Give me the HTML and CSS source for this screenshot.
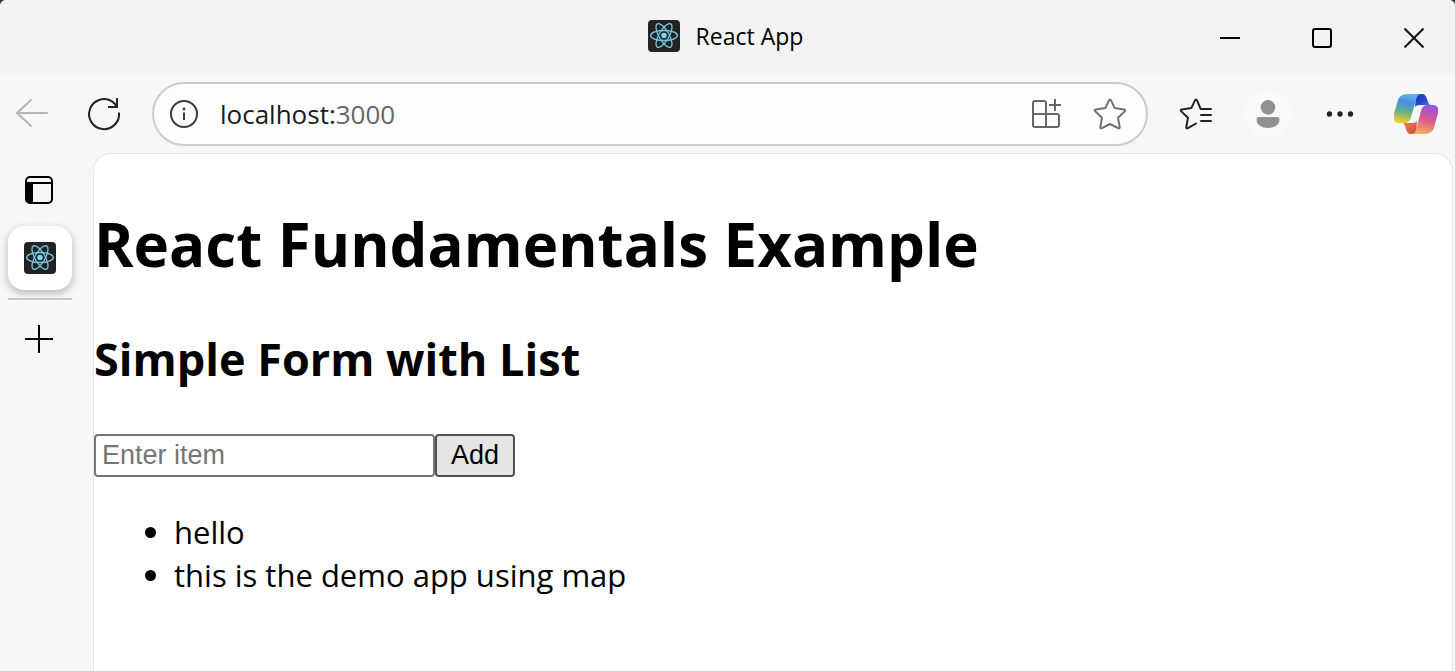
FILE: index.html
```html
<!DOCTYPE html>
<html lang="en">
<head>
<meta charset="utf-8">
<title>React App</title>
<link rel="stylesheet" href="styles.css">
</head>
<body>
<svg class="defs" aria-hidden="true">
  <symbol id="react-logo" viewBox="0 0 32 32">
    <rect width="32" height="32" rx="4" fill="#222"/>
    <circle cx="16" cy="15.500" r="2.700" fill="#7fd7f5"/>
    <g fill="none" stroke="#74c9e8" stroke-width="1.300">
      <ellipse cx="16" cy="15.500" rx="13.400" ry="5"/>
      <ellipse cx="16" cy="15.500" rx="13.400" ry="5" transform="rotate(60 16 15.500)"/>
      <ellipse cx="16" cy="15.500" rx="13.400" ry="5" transform="rotate(120 16 15.500)"/>
    </g>
  </symbol>
</svg>
<div class="window">
  <header class="titlebar">
    <div class="title">
      <svg class="icon-32" aria-hidden="true"><use href="#react-logo"/></svg>
      <span>React App</span>
    </div>
    <div class="window-controls">
      <button class="control" type="button" aria-label="Minimize"><svg width="20" height="20" viewBox="0 0 20 20"><path d="M0 10h20" stroke="#000" stroke-width="2"/></svg></button>
      <button class="control" type="button" aria-label="Maximize"><svg width="20" height="20" viewBox="0 0 20 20"><rect x="1" y="1" width="18" height="18" rx="2" fill="none" stroke="#000" stroke-width="2"/></svg></button>
      <button class="control" type="button" aria-label="Close"><svg width="20" height="20" viewBox="0 0 20 20"><path d="M.5.500l19 19M19.500.500l-19 19" stroke="#111" stroke-width="2"/></svg></button>
    </div>
  </header>

  <nav class="toolbar" aria-label="Browser toolbar">
    <button class="tool" type="button" aria-label="Back"><svg width="36" height="32" viewBox="0 0 36 32" fill="none" stroke="#b5b5b5" stroke-width="2" stroke-linecap="round" stroke-linejoin="round"><path d="M33 15H3M17 2 3 15l14 13"/></svg></button>
    <button class="tool" type="button" aria-label="Refresh"><svg width="36" height="36" viewBox="0 0 36 36" fill="none" stroke="#222" stroke-width="2"><path d="M33 16.500A15 15 0 1 1 26 5.400q2.600 1.600 4.600 5"/><path d="M31 2v9h-9"/></svg></button>
    <div class="address">
      <svg width="28" height="28" viewBox="0 0 28 28" aria-hidden="true"><circle cx="14" cy="14" r="13" fill="none" stroke="#3b3b3b" stroke-width="2"/><circle cx="14" cy="9" r="1.400" fill="#3b3b3b"/><path d="M14 12.500v7.500" stroke="#3b3b3b" stroke-width="2"/></svg>
      <span class="url">localhost:<span class="port">3000</span></span>
      <button class="address-action" type="button" aria-label="Install app"><svg width="32" height="32" viewBox="0 0 32 32" fill="none" stroke="#666" stroke-width="2"><path d="M16 29V5a2 2 0 0 0-2-2H5a2 2 0 0 0-2 2v22a2 2 0 0 0 2 2h22a2 2 0 0 0 2-2V18a2 2 0 0 0-2-2H3M19 7h12M25 1v12"/></svg></button>
      <button class="address-action" type="button" aria-label="Add to favorites"><svg width="34" height="34" viewBox="0 0 34 34" fill="none" stroke="#707070" stroke-width="2" stroke-linejoin="round"><path d="M16 3.400Q17 1.400 18 3.400l3.700 7.700 9.300 1.300q2.200.4.700 2L25 20.800l1.700 9.200q.2 2-1.600 1.200L17 27l-8.100 4.200q-1.800.8-1.600-1.200L9 20.800l-6.700-6.400q-1.500-1.600.7-2l9.300-1.300z"/></svg></button>
    </div>
    <button class="tool" type="button" aria-label="Favorites"><svg width="34" height="34" viewBox="0 0 34 34" fill="none" stroke="#222" stroke-width="2" stroke-linejoin="round" stroke-linecap="round"><path d="M32 12H21.700L18 3.400q-1-2-2 0l-3.700 7.700L3 12.400q-2.200.4-.7 2L9 20.800 7.300 30q-.2 2 1.600 1.200l8.100-4.700M22 18h10M22 24h10"/></svg></button>
    <button class="tool" type="button" aria-label="Profile"><svg width="48" height="48" viewBox="0 0 48 48"><circle cx="24" cy="24" r="24" fill="#fafafa"/><circle cx="24" cy="17.300" r="7.300" fill="#919191"/><path d="M15 27h18q2.500 0 2.500 2.500C35.500 35 30 38 24 38s-11.500-3-11.500-8.500Q12.500 27 15 27z" fill="#919191"/></svg></button>
    <button class="tool" type="button" aria-label="Settings and more"><svg width="28" height="8" viewBox="0 0 28 8" fill="#222"><circle cx="3.500" cy="4" r="2.700"/><circle cx="14" cy="4" r="2.700"/><circle cx="24.500" cy="4" r="2.700"/></svg></button>
    <button class="tool tool-wide" type="button" aria-label="Copilot">
      <svg width="44" height="40" viewBox="0 0 44 40">
        <defs>
          <linearGradient id="cool" x1=".6" y1="0" x2=".4" y2="1"><stop offset="0" stop-color="#63b5f4"/><stop offset=".3" stop-color="#488fdf"/><stop offset=".62" stop-color="#62af88"/><stop offset="1" stop-color="#f0ce2e"/></linearGradient>
          <linearGradient id="warm" x1=".6" y1="0" x2=".4" y2="1"><stop offset="0" stop-color="#9652e6"/><stop offset=".5" stop-color="#db5a8b"/><stop offset="1" stop-color="#f0b05e"/></linearGradient>
          <linearGradient id="blue" x1="0" y1="0" x2="1" y2="1"><stop offset="0" stop-color="#2937a8"/><stop offset=".5" stop-color="#2947cb"/><stop offset="1" stop-color="#3688dc"/></linearGradient>
          <linearGradient id="red" x1="0" y1="0" x2="1" y2="1"><stop offset="0" stop-color="#ee8d4b"/><stop offset="1" stop-color="#c9433c"/></linearGradient>
        </defs>
        <path d="M22 0h6c3 0 4 2 5 5l1 3c.6 2 1.500 3 3 3H27c-3 0-5 .5-6 2z" fill="url(#blue)"/>
        <path d="M22 40h-5c-3 0-4-2-5-5l-1-3c-.6-2-1.500-3-3-3h9c3 0 5-.5 6-2z" fill="url(#red)"/>
        <path d="M14 0h14c-4 0-5 2-6 6l-5 17c-1 4-3 6-7 6H5c-4 0-6-3-5-9L4 6c1.500-4 5-6 10-6z" fill="url(#cool)"/>
        <path d="M30 40H17c4 0 4.500-3 5.500-6l4.500-17c1-4 3-6 7-6h5c4 0 6 3 5 8l-4 15c-1.500 4-5 6-10 6z" fill="url(#warm)"/>
      </svg>
    </button>
  </nav>

  <div class="workspace">
    <aside class="tabs" aria-label="Tabs">
      <button class="tab-action" type="button" aria-label="Tab actions"><svg width="28" height="28" viewBox="0 0 28 28"><rect x="1" y="1" width="26" height="26" rx="4" fill="none" stroke="#000" stroke-width="2"/><path d="M1 7h26" stroke="#000" stroke-width="2"/><path d="M1 7h7v20H5a4 4 0 0 1-4-4z"/></svg></button>
      <button class="tab" type="button" aria-label="React App"><svg class="icon-32"><use href="#react-logo"/></svg></button>
      <div class="divider"></div>
      <button class="tab-action" type="button" aria-label="New tab"><svg width="28" height="28" viewBox="0 0 28 28"><path d="M0 14h28M14 0v28" stroke="#000" stroke-width="2"/></svg></button>
    </aside>
    <main class="page">
      <h1>React Fundamentals Example</h1>
      <h2>Simple Form with List</h2>
      <form class="item-form">
        <input class="item-input" type="text" placeholder="Enter item" aria-label="Enter item">
        <button class="add" type="button">Add</button>
      </form>
      <ul class="items">
        <li>hello</li>
        <li>this is the demo app using map</li>
      </ul>
    </main>
  </div>
</div>
</body>
</html>
```
FILE: styles.css
```css
* {
  box-sizing: border-box;
}

body {
  margin: 0;
  background: #333;
  color: #000;
  font-family: "Segoe UI", "Open Sans", "Noto Sans", sans-serif;
}

button {
  padding: 0;
  border: 0;
  background: none;
  color: inherit;
}

svg {
  display: block;
  flex: none;
}

.defs {
  display: none;
}

.icon-32 {
  width: 32px;
  height: 32px;
}

.window {
  display: flex;
  flex-direction: column;
  min-height: 100vh;
  border-radius: 6px 6px 0 0;
  background: #f7f7f7;
  overflow: hidden;
}

.titlebar {
  display: grid;
  grid-template-columns: 1fr auto 1fr;
  align-items: center;
  height: 74px;
  background: #f3f3f3;
}

.title {
  grid-column: 2;
  display: flex;
  align-items: center;
  gap: 16px;
  padding: 0 4px 2px 0;
  font-size: 23px;
  line-height: 32px;
}

.window-controls {
  display: flex;
  justify-content: flex-end;
  gap: 10px;
}

.control {
  display: grid;
  place-items: center;
  width: 82px;
  height: 74px;
  padding-top: 2px;
}

.toolbar {
  display: flex;
  align-items: center;
  gap: 8px;
  height: 79px;
  padding-right: 3px;
}

.tool {
  display: grid;
  place-items: center;
  flex: none;
  width: 64px;
  height: 64px;
}

.tool-wide {
  width: 72px;
}

.address {
  display: flex;
  flex: 1;
  align-items: center;
  height: 64px;
  margin: 0 8px;
  padding: 0 4px 0 16px;
  border: 2px solid #ccc;
  border-radius: 32px;
  background: #fdfdfd;
}

.url {
  flex: 1;
  margin-left: 22px;
  color: #1b1b1b;
  font-size: 26px;
  line-height: 36px;
}

.port {
  color: #666;
}

.address-action {
  display: grid;
  place-items: center;
  width: 64px;
  height: 60px;
}

.workspace {
  display: flex;
  flex: 1;
}

.tabs {
  display: flex;
  flex: none;
  flex-direction: column;
  align-items: center;
  width: 93px;
  padding: 7px 21px 0 8px;
}

.tab-action {
  display: grid;
  place-items: center;
  width: 60px;
  height: 60px;
  margin-right: 3px;
}

.tab {
  display: grid;
  place-items: center;
  width: 64px;
  height: 64px;
  margin-top: 6px;
  border-radius: 16px;
  background: #fff;
  box-shadow: 0 3px 8px rgb(0 0 0 / 28%);
}

.divider {
  width: 64px;
  height: 2px;
  margin: 8px 0 9px;
  background: #c8c8c8;
}

.page {
  flex: 1;
  margin-right: 2px;
  padding-top: 47px;
  border: 1px solid #e5e5e5;
  border-bottom: 0;
  border-radius: 18px 18px 0 0;
  background: #fff;
  font-size: 31px;
  line-height: 43px;
}

h1 {
  margin: 0;
  font-size: 60px;
  line-height: 86px;
}

h2 {
  margin: 40px 0 43px;
  font-size: 45px;
  line-height: 64px;
}

.item-form {
  display: flex;
}

.item-input,
.add {
  height: 43px;
  border: 2px solid #767676;
  border-radius: 4px;
  font: 27px/32px "Liberation Sans", Arial, sans-serif;
}

.item-input {
  width: 341px;
  padding: 0 6px;
  background: #fff;
}

.item-input::placeholder {
  color: #757575;
  opacity: 1;
}

.add {
  padding: 0 14px 2px;
  border-color: #505050;
  background: #e5e5e5;
}

.items {
  margin: 34px 0;
  padding-left: 80px;
}
```
